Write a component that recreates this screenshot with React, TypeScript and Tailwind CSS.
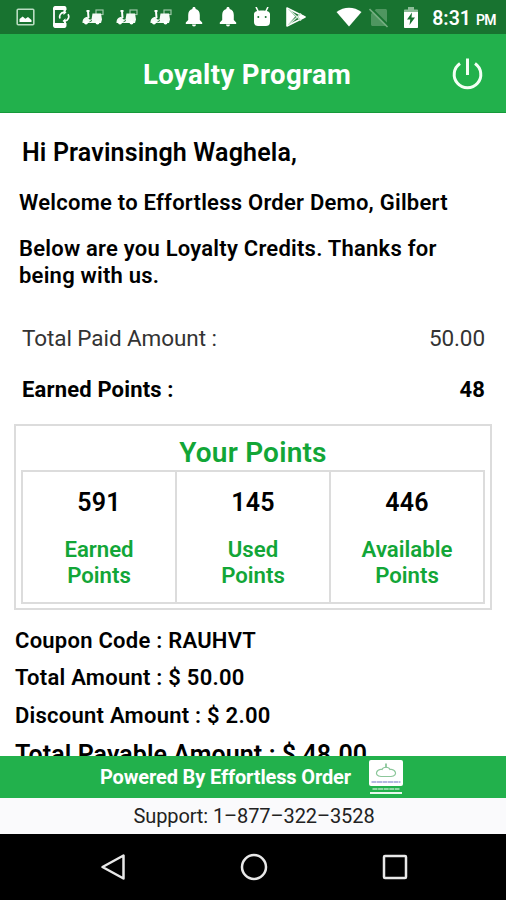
const points = [
  { value: '591', label: 'Earned' },
  { value: '145', label: 'Used' },
  { value: '446', label: 'Available' },
];

const Scooter = () => (
  <svg className="w-[22px] h-[18px]" viewBox="0 0 22 18" fill="none">
    <rect x="14" y="2" width="7" height="4.500" stroke="#9cc6a6" strokeWidth="1.200" />
    <path d="M4.500 3h3M6 3l.5 7" stroke="#fff" strokeWidth="2" />
    <path d="M.5 15c0-3.500 1.500-6 5-6l2 2.500h2l1-6h8.500l1 6-1 3.500H1z" fill="#f4faf5" />
    <circle cx="4" cy="14.500" r="2" fill="#fff" />
    <circle cx="15.500" cy="14.500" r="2" fill="#fff" />
    <path d="M7.500 13.800l2.500-1.300" stroke="#187330" strokeWidth="1" />
  </svg>
);

const Bell = () => (
  <svg className="w-[18px] h-[20px]" viewBox="0 0 18 20" fill="#fff">
    <path d="M9 0c-1 0-1.600.7-1.600 1.600v.5C4.700 2.800 3.200 5 3.200 8v5L.8 15.500v1.500h16.400v-1.500L14.800 13V8c0-3-1.500-5.200-4.200-5.900v-.5C10.600.7 10 0 9 0zM7 17.500a2 2 0 004 0z" />
  </svg>
);

const StatusBar = () => (
  <div className="h-[34px] shrink-0 bg-[#187330] flex items-center pl-[16px] pr-[10px] text-white">
    <svg className="w-[19px] h-[18px] shrink-0" viewBox="0 0 19 18" fill="none">
      <rect x="1.200" y="1.200" width="16.600" height="15.600" rx="1" stroke="#b9dcc1" strokeWidth="1.600" />
      <path d="M3.500 14V11l3.200-2.500 2.600 2.300 2.700-1.800 3.500 3V14z" fill="#fff" />
    </svg>
    <svg className="w-[19px] h-[24px] ml-[16px] shrink-0" viewBox="0 0 19 24" fill="none">
      <path d="M14 6.500V4H3v15h11v-2.500" stroke="#fff" strokeWidth="1.800" />
      <path d="M2 3.500C2 2 3 1 4 1h9.500c1.200 0 2 1 2 2.500V5H2zM2 18h13.500v2.500c0 1.500-1 2.500-2 2.500H4c-1 0-2-1-2-2.500z" fill="#fff" />
      <path d="M9 13.500A4.400 4.400 0 0113 7.400M14 16a4.400 4.400 0 003-6.800" stroke="#fff" strokeWidth="1.700" />
      <path d="M12.500 4.800v5.200l3-2.600zM14.500 13.300v5.200l-3-2.600z" fill="#fff" />
    </svg>
    <div className="flex gap-[12px] ml-[12px] shrink-0">
      <Scooter />
      <Scooter />
      <Scooter />
    </div>
    <div className="flex gap-[16px] ml-[13px] shrink-0">
      <Bell />
      <Bell />
    </div>
    <svg className="w-[18px] h-[20px] ml-[16px] shrink-0" viewBox="0 0 18 20" fill="none">
      <path d="M3 0l2.500 5M15 0l-2.500 5" stroke="#fff" strokeWidth="1.600" />
      <path d="M1 7C1 4.500 4.500 3.500 9 3.500s8 1 8 3.500v8c0 3-2 4-4 4H5c-2 0-4-1-4-4z" fill="#fff" />
      <circle cx="5.300" cy="10" r="1" fill="#187330" />
      <circle cx="12.700" cy="10" r="1" fill="#187330" />
    </svg>
    <svg className="w-[20px] h-[20px] ml-[15px] shrink-0" viewBox="0 0 20 20" fill="none">
      <path d="M1 1l8.300 8.500L1 19z" fill="#fff" />
      <path d="M1 1l18 9L1 19z" stroke="#fff" strokeWidth="1.600" strokeLinejoin="round" />
      <path d="M3 2.500l12 11M3 17.500l12-11" stroke="#d5ead9" strokeWidth="1.500" />
      <path d="M15 7.300l4.500 2.600-4.500 2.500-3-2.500z" fill="#fff" />
    </svg>
    <svg className="w-[26px] h-[20px] ml-[30px] shrink-0" viewBox="0 0 26 20" fill="#fff">
      <path d="M.5 5C8-.8 18-.8 25.500 5L13 19.500z" />
    </svg>
    <svg className="w-[20px] h-[21px] ml-[7px] shrink-0" viewBox="0 0 20 21" fill="none">
      <path d="M7 2h9.500c.8 0 1.500.7 1.500 1.500v14c0 .8-.7 1.500-1.500 1.500h-13C2.700 19 2 18.300 2 17.500V7z" fill="#4f9660" />
      <path d="M2 1l17 17" stroke="#187330" strokeWidth="1.800" />
      <path d="M.5 2l18 18" stroke="#75ae82" strokeWidth="1.600" />
    </svg>
    <svg className="w-[16px] h-[21px] ml-[14px] shrink-0" viewBox="0 0 16 21" fill="none">
      <path d="M5 0h6v2.500h3c.6 0 1 .4 1 1V8H1V3.500c0-.6.400-1 1-1h3z" fill="#8dbd98" />
      <path d="M1 5h14v15c0 .6-.4 1-1 1H2c-.6 0-1-.4-1-1z" fill="#fff" />
      <path d="M9 5.500l-5 7h3.300L6.500 18l5.500-7.500H8.500z" fill="#187330" />
    </svg>
    <div className="flex-1 flex items-baseline justify-end font-semibold whitespace-nowrap pt-[3px]">
      <span className="text-[19.500px]">8:31</span>
      <span className="text-[14px] ml-[5px] tracking-[-0.600px]">PM</span>
    </div>
  </div>
);

const Header = () => (
  <header className="h-[79px] shrink-0 bg-[#22b14c] border-b border-[#159a3a] flex items-center justify-between pl-[143px] pr-[22px]">
    <h1 className="text-white font-bold text-[27.500px] tracking-[0.380px] whitespace-nowrap pt-[4px]">Loyalty Program</h1>
    <svg className="w-[33px] h-[33px]" viewBox="0 0 33 33" fill="none" stroke="#f3fff5" strokeWidth="3">
      <path d="M16.500 1.500v16.500M9 6.500a13.300 13.300 0 1015 0" />
    </svg>
  </header>
);

const PointsTable = () => (
  <section className="ml-[14px] mr-[14px] mt-[19.500px] h-[186px] border-2 border-[#dcdcdc] px-[5px]">
    <h2 className="h-[44px] pt-[9px] text-center text-[28px] leading-[36px] font-semibold tracking-[0.200px] text-[#12a637]">
      Your Points
    </h2>
    <div className="grid grid-cols-3 h-[134px] border border-[#dcdcdc]">
      {points.map((p) => (
        <div key={p.label} className="border border-[#dcdcdc] text-center pt-[15px]">
          <div className="text-[25px] leading-[32px] font-semibold tracking-[0.300px]">{p.value}</div>
          <div className="mt-[17px] text-[22.200px] leading-[26.500px] font-semibold text-[#12a637]">
            {p.label}
            <br />
            Points
          </div>
        </div>
      ))}
    </div>
  </section>
);

const Footer = () => (
  <footer className="shrink-0">
    <div className="h-[42px] bg-[#22b14c] flex items-center pl-[100px]">
      <span className="w-[252px] text-white font-bold text-[20px] tracking-[-0.140px] whitespace-nowrap">
        Powered By Effortless Order
      </span>
      <svg className="ml-[16px] w-[36px] h-[36px]" viewBox="0 0 36 36" fill="none">
        <rect x="1" y="1" width="34" height="26" rx="2" fill="#fff" />
        <path d="M13 17.500C5 16.500 9 9.500 14 10.500c1-3 7-3 8 0 5-1 9 6 1 7z" stroke="#8bc79a" strokeWidth="1.200" />
        <path d="M18 4.500v4" stroke="#7dbf8e" strokeWidth="1.600" />
        <path d="M3.500 23h29" stroke="#9da1d6" strokeWidth="1.600" strokeDasharray="5 .5" />
        <path d="M4.500 30h27" stroke="#b5e5c2" strokeWidth="1.600" strokeDasharray="5 .6" />
        <path d="M2 34h32" stroke="#fff" strokeWidth="1.800" />
      </svg>
    </div>
    <div className="h-[36px] bg-[#fafafc] flex items-center justify-center text-[20px] tracking-[-0.100px] text-[#222] pl-[2px]">
      <span>Support: 1–877–322–3528</span>
    </div>
    <nav className="h-[66px] bg-black flex items-center pl-[100px]">
      <svg className="w-[26px] h-[28px]" viewBox="0 0 26 28" fill="none" stroke="#e8e8e8" strokeWidth="2.500">
        <path d="M23.500 2.500v23L2.500 14z" strokeLinejoin="round" />
      </svg>
      <svg className="w-[28px] h-[28px] ml-[113.500px]" viewBox="0 0 28 28" fill="none" stroke="#e8e8e8" strokeWidth="2.500">
        <circle cx="14" cy="14" r="12" />
      </svg>
      <svg className="w-[26px] h-[26px] ml-[114px]" viewBox="0 0 26 26" fill="none" stroke="#e8e8e8" strokeWidth="2.500">
        <rect x="2" y="2" width="22" height="22" rx="1" />
      </svg>
    </nav>
  </footer>
);

const App = () => {
  return (
    <div className="w-[506px] h-[900px] overflow-hidden flex flex-col bg-white text-black font-['Roboto',sans-serif]">
      <StatusBar />
      <Header />

      <main className="flex-1 min-h-0 overflow-hidden font-semibold whitespace-nowrap">
        {/* Greeting */}
        <h2 className="mt-[24px] ml-[22px] text-[25px] leading-[32px] tracking-[0.160px]">Hi Pravinsingh Waghela,</h2>
        <p className="mt-[20px] ml-[19px] text-[22px] leading-[28px] tracking-[0.240px]">
          Welcome to Effortless Order Demo, Gilbert
        </p>
        <p className="mt-[18px] ml-[19px] text-[22px] leading-[27px] tracking-[0.230px]">
          Below are you Loyalty Credits. Thanks for
          <br />
          being with us.
        </p>

        {/* Totals */}
        <div className="mt-[35px] pl-[22px] pr-[21px] flex justify-between font-normal text-[22.500px] leading-[28px] tracking-[-0.080px] text-[#333]">
          <span>Total Paid Amount :</span>
          <span>50.00</span>
        </div>
        <div className="mt-[24px] pl-[22px] pr-[21px] flex justify-between font-bold text-[22px] leading-[28px] tracking-[0.160px]">
          <span>Earned Points :</span>
          <span>48</span>
        </div>

        <PointsTable />

        {/* Coupon details */}
        <div className="mt-[12px] ml-[15px] text-[22px] leading-[37.500px] tracking-[0.250px]">
          <p>Coupon Code : RAUHVT</p>
          <p>Total Amount : $ 50.00</p>
          <p>Discount Amount : $ 2.00</p>
          <p className="mt-[2px] text-[25px] tracking-[0.080px]">Total Payable Amount : $ 48.00</p>
        </div>
      </main>

      <Footer />
    </div>
  );
};

export default App;
